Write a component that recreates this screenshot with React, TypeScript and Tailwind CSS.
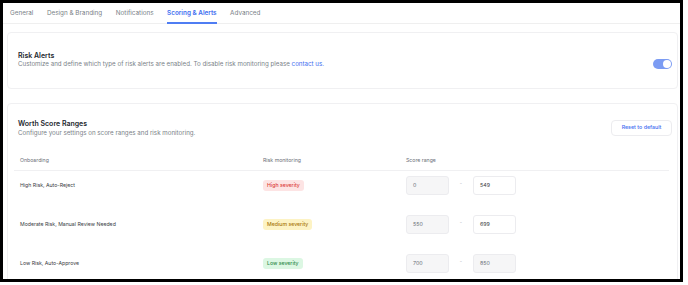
import React from "react";

const rows = [
  { label: "High Risk, Auto-Reject", badge: "High severity", badgeCls: "bg-[#fde4e4] text-[#dc3a3a]", min: "0", max: "549", maxDisabled: false },
  { label: "Moderate Risk, Manual Review Needed", badge: "Medium severity", badgeCls: "bg-[#fdf3c4] text-[#a8760a]", min: "550", max: "699", maxDisabled: false },
  { label: "Low Risk, Auto-Approve", badge: "Low severity", badgeCls: "bg-[#dcf7e3] text-[#2f8a4a]", min: "700", max: "850", maxDisabled: true },
];

export default function App() {
  const tabs = ["General", "Design & Branding", "Notifications", "Scoring & Alerts", "Advanced"];
  return (
    <div className="w-[688px] h-[285px] bg-white" style={{ fontFamily: "Inter, 'Noto Sans', sans-serif" }}>
      <div className="w-[683px] h-[282px] border-[3px] border-black bg-white overflow-hidden flex flex-col">
        {/* Tabs */}
        <div className="h-[21px] shrink-0 border-b border-[#efefef] flex items-stretch gap-[13.5px] pl-[7px]">
          {tabs.map((t) => {
            const active = t === "Scoring & Alerts";
            return (
              <div
                key={t}
                className={
                  "flex items-center text-[6.35px] leading-none pt-[1px] border-b-2 -mb-px " +
                  (active ? "border-[#4f7df3] text-[#3d6cf0] font-semibold" : "border-transparent text-[#7a7f88]")
                }
              >
                {t}
              </div>
            );
          })}
        </div>

        <div className="flex flex-col gap-[14px] pt-[8px] pl-[4px] pr-[2px]">
          {/* Risk Alerts card */}
          <div className="h-[57px] border border-[#f0f0f2] rounded-[4px] flex items-center justify-between pl-[10px] pr-[5px]">
            <div className="flex flex-col gap-[2px] -mt-[1px]">
              <div className="text-[7px] leading-none font-semibold text-[#24272e]">Risk Alerts</div>
              <div className="text-[6.2px] leading-none text-[#7a7f88]">
                Customize and define which type of risk alerts are enabled. To disable risk monitoring please{" "}
                <span className="text-[#3d6cf0]">contact us.</span>
              </div>
            </div>
            <div className="mt-[6px] w-[19px] h-[10px] rounded-full bg-[#7c9cf3] flex items-center justify-end pr-[1px]">
              <div className="w-[8px] h-[8px] rounded-full bg-white" />
            </div>
          </div>

          {/* Worth Score Ranges card */}
          <div className="h-[200px] border border-[#f0f0f2] rounded-[4px] pl-[10px] pr-[5px] pt-[15px]">
            <div className="flex items-start justify-between">
              <div className="flex flex-col gap-[3px] pt-[1px]">
                <div className="text-[7px] leading-none font-semibold text-[#24272e]">Worth Score Ranges</div>
                <div className="text-[6.2px] leading-none text-[#7a7f88]">Configure your settings on score ranges and risk monitoring.</div>
              </div>
              <div className="w-[61px] h-[16px] rounded-[4px] border border-[#ececef] flex items-center justify-center text-[5.3px] font-medium text-[#3d6cf0] mt-[1px]">
                Reset to default
              </div>
            </div>

            <div className="mt-[15px] -ml-[4px] mr-[3px]">
              <div className="h-[20px] border-b border-[#f0f0f2] flex items-center text-[5.2px] text-[#6b7078]">
                <div className="w-[249px] pl-[6px]">Onboarding</div>
                <div className="w-[143px]">Risk monitoring</div>
                <div>Score range</div>
              </div>
              {rows.map((r) => (
                <div key={r.label} className="h-[39px] pt-[5px] flex items-start">
                  <div className="h-[19px] flex items-center w-[249px] pl-[6px] text-[5.2px] text-[#3a3d44]">{r.label}</div>
                  <div className="h-[19px] flex items-center w-[143px]">
                    <span className={"h-[11px] px-[4px] rounded-[3px] flex items-center text-[5.2px] font-medium " + r.badgeCls}>{r.badge}</span>
                  </div>
                  <div className="flex items-center">
                    <div className="w-[43px] h-[19px] rounded-[3px] border border-[#ececef] bg-[#f6f6f7] flex items-center pl-[6px] text-[5.3px] text-[#6b7078]">
                      {r.min}
                    </div>
                    <div className="w-[24px] text-center text-[5px] text-[#b0b3b8] -mt-[4px]">-</div>
                    <div
                      className={
                        "w-[43px] h-[19px] rounded-[3px] border border-[#ececef] flex items-center pl-[6px] text-[5.3px] " +
                        (r.maxDisabled ? "bg-[#f6f6f7] text-[#6b7078]" : "bg-white text-[#3a3d44]")
                      }
                    >
                      {r.max}
                    </div>
                  </div>
                </div>
              ))}
            </div>
          </div>
        </div>
      </div>
    </div>
  );
}
